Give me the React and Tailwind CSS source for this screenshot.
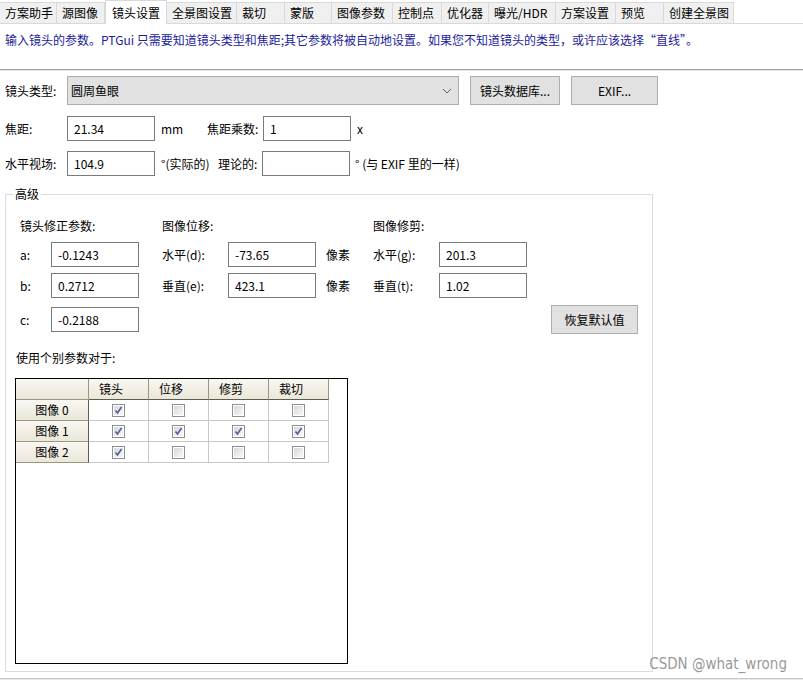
import React from 'react';

const tabs = [
  { label: '方案助手', w: 'w-[57px]' },
  { label: '源图像', w: 'w-[48px]' },
  { label: '镜头设置', w: 'w-[62px]', active: true },
  { label: '全景图设置', w: 'w-[70px]' },
  { label: '裁切', w: 'w-[48px]' },
  { label: '蒙版', w: 'w-[47px]' },
  { label: '图像参数', w: 'w-[61px]' },
  { label: '控制点', w: 'w-[49px]' },
  { label: '优化器', w: 'w-[47px]' },
  { label: '曝光/HDR', w: 'w-[67px]' },
  { label: '方案设置', w: 'w-[60px]' },
  { label: '预览', w: 'w-[48px]' },
  { label: '创建全景图', w: 'w-[70px]' },
];

function Field({ value, w = 'w-[88px]' }) {
  return (
    <div className={`${w} h-[25px] border border-[#7a7a7a] bg-white flex items-center px-[6px] text-[12px] text-black`}>
      {value}
    </div>
  );
}

function Btn({ children, w }) {
  return (
    <div className={`${w} h-[29px] border border-[#adadad] bg-[#e1e1e1] flex items-center justify-center text-[12px] text-black`}>
      {children}
    </div>
  );
}

function Check({ on }) {
  return (
    <svg width="13" height="13" viewBox="0 0 13 13">
      <defs>
        <linearGradient id="cb" x1="0" y1="0" x2="1" y2="1">
          <stop offset="0" stopColor="#d8d8d8" />
          <stop offset="1" stopColor="#f8f8f8" />
        </linearGradient>
      </defs>
      <rect x="0.5" y="0.5" width="12" height="12" fill="#fff" stroke="#8e8f8f" />
      <rect x="2" y="2" width="9" height="9" fill="url(#cb)" />
      {on && <path d="M3.5 6.5 L5.5 9 L9.5 3" fill="none" stroke="#4a5ea0" strokeWidth="1.6" />}
    </svg>
  );
}

const rows = [
  { name: '图像 0', v: [true, false, false, false] },
  { name: '图像 1', v: [true, true, true, true] },
  { name: '图像 2', v: [true, false, false, false] },
];

export default function App() {
  return (
    <div className="w-[803px] h-[683px] bg-white text-[12px] text-black overflow-hidden" style={{ fontFamily: '"Noto Sans CJK SC", sans-serif' }}>
      {/* Tabs */}
      <div className="flex items-end h-[24px] border-b border-[#d9d9d9]">
        {tabs.map((t) =>
          t.active ? (
            <div key={t.label} className={`${t.w} h-[24px] -mb-px bg-white border-x border-t border-[#d9d9d9] pl-[6px] flex items-center`}>
              {t.label}
            </div>
          ) : (
            <div key={t.label} className={`${t.w} h-[21px] bg-[#f0f0f0] border-r border-t border-[#d9d9d9] pl-[5px] flex items-center`}>
              {t.label}
            </div>
          )
        )}
      </div>

      {/* Hint */}
      <div className="h-[45px] pl-[5px] pt-[7px] text-[#1c1c9c]">
        输入镜头的参数。PTGui 只需要知道镜头类型和焦距;其它参数将被自动地设置。如果您不知道镜头的类型，或许应该选择“直线”。
      </div>
      <div className="border-t border-[#a0a0a0]" />
      <div className="border-t border-[#e6e6e6]" />

      {/* Lens type row */}
      <div className="flex items-center mt-[5px] h-[29px]">
        <div className="w-[67px] pl-[5px]">镜头类型:</div>
        <div className="w-[392px] h-[29px] border border-[#adadad] bg-[#e1e1e1] flex items-center justify-between pl-[3px] pr-[6px]">
          <span>圆周鱼眼</span>
          <svg width="10" height="6" viewBox="0 0 10 6"><path d="M1 1 L5 5 L9 1" fill="none" stroke="#606060" strokeWidth="1" /></svg>
        </div>
        <div className="ml-[11px]"><Btn w="w-[90px]">镜头数据库...</Btn></div>
        <div className="ml-[11px]"><Btn w="w-[87px]">EXIF...</Btn></div>
      </div>

      {/* Focal length */}
      <div className="flex items-center mt-[11px] h-[25px]">
        <div className="w-[67px] pl-[5px]">焦距:</div>
        <Field value="21.34" />
        <div className="w-[52px] pl-[6px]">mm</div>
        <div className="w-[56px]">焦距乘数:</div>
        <Field value="1" />
        <div className="pl-[6px]">x</div>
      </div>

      {/* FOV */}
      <div className="flex items-center mt-[10px] h-[25px]">
        <div className="w-[67px] pl-[5px]">水平视场:</div>
        <Field value="104.9" />
        <div className="w-[63px] pl-[6px]">°(实际的)</div>
        <div className="w-[44px]">理论的:</div>
        <Field value="" />
        <div className="pl-[5px]">° (与 EXIF 里的一样)</div>
      </div>

      {/* Advanced group */}
      <fieldset className="ml-[5px] mt-[10px] w-[648px] h-[486px] border border-[#dcdcdc] p-0">
        <legend className="ml-[7px] px-[2px] leading-[16px]">高级</legend>

        <div className="flex mt-[16px] h-[16px] items-center">
          <div className="w-[156px] pl-[14px]">镜头修正参数:</div>
          <div className="w-[211px]">图像位移:</div>
          <div>图像修剪:</div>
        </div>

        <div className="flex items-center mt-[8px] h-[25px]">
          <div className="w-[45px] pl-[14px]">a:</div>
          <Field value="-0.1243" />
          <div className="w-[23px]" />
          <div className="w-[66px]">水平(d):</div>
          <Field value="-73.65" />
          <div className="w-[57px] pl-[10px]">像素</div>
          <div className="w-[66px]">水平(g):</div>
          <Field value="201.3" />
        </div>

        <div className="flex items-center mt-[6px] h-[25px]">
          <div className="w-[45px] pl-[14px]">b:</div>
          <Field value="0.2712" />
          <div className="w-[23px]" />
          <div className="w-[66px]">垂直(e):</div>
          <Field value="423.1" />
          <div className="w-[57px] pl-[10px]">像素</div>
          <div className="w-[66px]">垂直(t):</div>
          <Field value="1.02" />
        </div>

        <div className="flex items-center mt-[7px] h-[29px]">
          <div className="w-[45px] pl-[14px]">c:</div>
          <Field value="-0.2188" />
          <div className="ml-auto mr-[14px]"><Btn w="w-[87px]">恢复默认值</Btn></div>
        </div>

        <div className="mt-[16px] pl-[10px] h-[16px] leading-[16px]">使用个别参数对于:</div>

        {/* Table */}
        <div className="ml-[9px] mt-[12px] w-[333px] h-[286px] border border-black bg-white">
          <div className="flex h-[21px]">
            <div className="w-[73px] border-r border-b border-[#9b9785] bg-gradient-to-b from-[#f8f7f2] to-[#ebe7d9]" />
            {['镜头', '位移', '修剪', '裁切'].map((h) => (
              <div key={h} className="w-[60px] border-r border-b border-[#9b9785] border-b-[#5e5b50] bg-gradient-to-b from-[#f8f7f2] to-[#ebe7d9] pl-[10px] flex items-center">
                {h}
              </div>
            ))}
          </div>
          {rows.map((r) => (
            <div key={r.name} className="flex h-[21px]">
              <div className="w-[73px] border-r border-b border-r-[#5e5b50] border-b-[#9b9785] bg-gradient-to-b from-[#f8f7f2] to-[#ebe7d9] flex items-center justify-center">
                {r.name}
              </div>
              {r.v.map((on, i) => (
                <div key={i} className="w-[60px] border-r border-b border-[#c8c8c8] flex items-center justify-center">
                  <Check on={on} />
                </div>
              ))}
            </div>
          ))}
        </div>
      </fieldset>

      <div className="relative">
        <div className="absolute right-[16px] -top-[19px] text-[15px] text-[#9a9a9a]" style={{ fontFamily: '"Liberation Sans Narrow", "DejaVu Sans Condensed", sans-serif' }}>
          CSDN @what_wrong
        </div>
      </div>
      <div className="mt-[6px] border-t border-[#c8c8c8]" />
      <div className="border-t border-[#e8e8e8]" />
    </div>
  );
}
